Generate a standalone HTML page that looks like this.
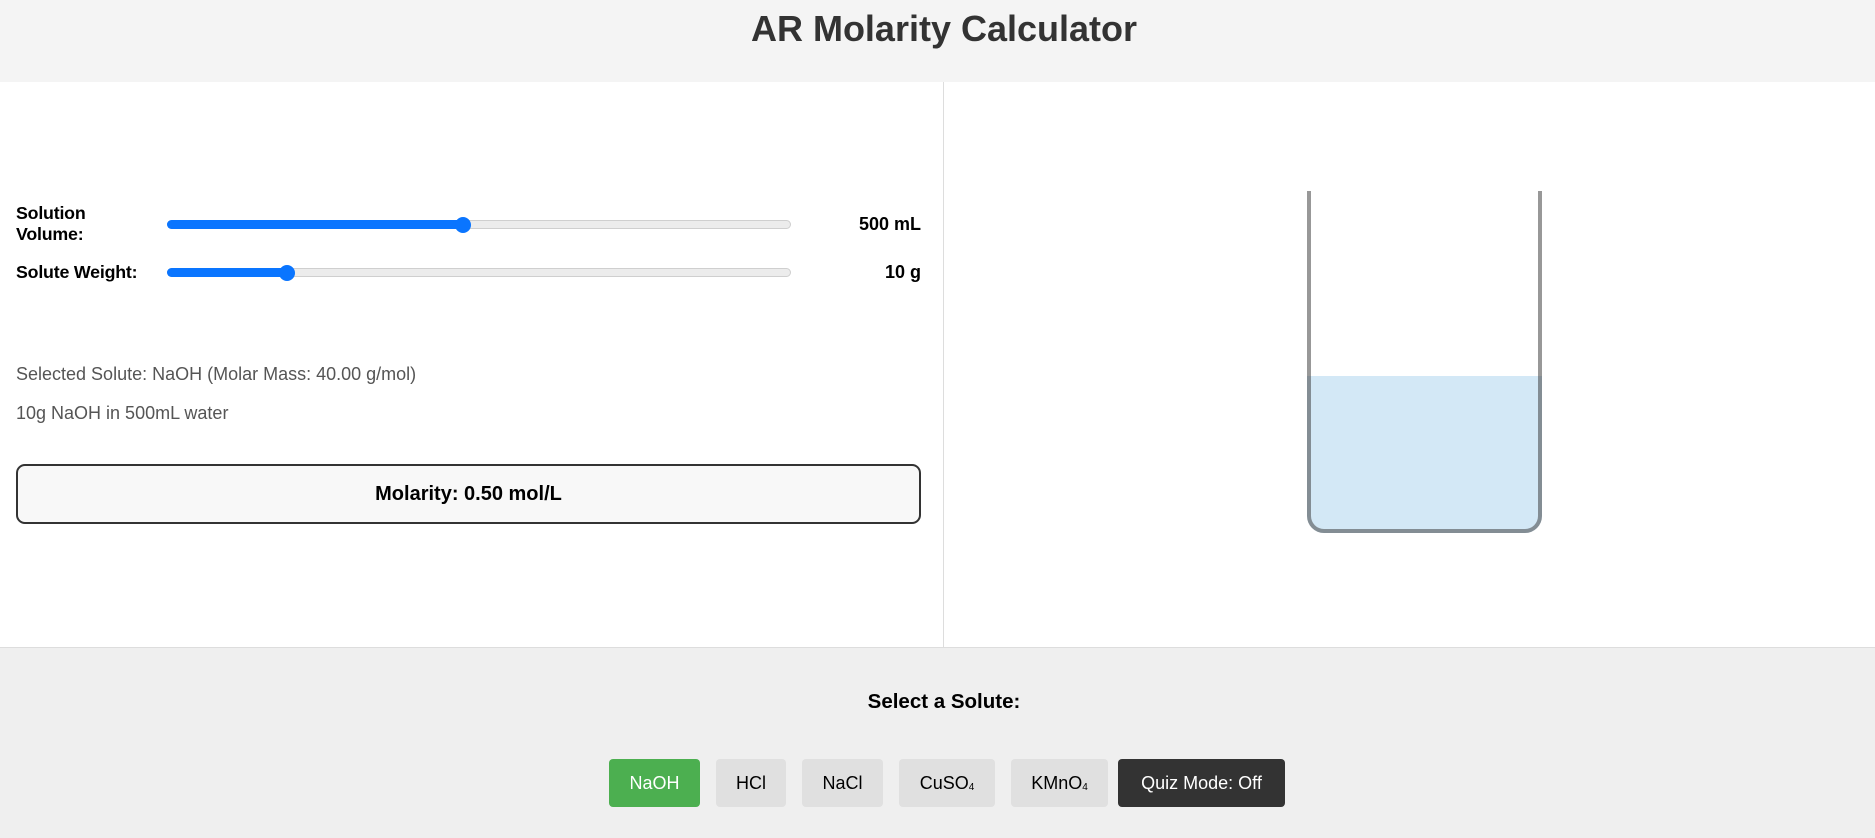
<!DOCTYPE html>
<html><head><meta charset="utf-8"><style>
*{margin:0;padding:0;box-sizing:border-box}
body{width:1875px;height:838px;overflow:hidden;font-family:"Liberation Sans",Arial,sans-serif;background:#fff;position:relative}
.hdr{position:absolute;left:0;top:0;width:1875px;height:82px;background:#f4f4f4}
.hdr h1{position:absolute;left:0;width:1888px;top:8px;text-align:center;font-size:36px;color:#333;font-weight:bold}
.div{position:absolute;left:943px;top:82px;width:1px;height:565px;background:#ddd}
.lbl{position:absolute;left:16px;font-weight:bold;font-size:17.8px;color:#000;line-height:21px;letter-spacing:-0.2px}
.val{position:absolute;right:954px;font-weight:bold;font-size:18px;color:#000}
.track{position:absolute;left:167px;width:624px;height:9px;border-radius:5px;background:#ececec;border:1px solid #cfcfcf}
.fill{position:absolute;left:167px;height:9px;border-radius:5px;background:#0a75ff}
.thumb{position:absolute;width:16px;height:16px;border-radius:50%;background:#0a75ff}
.txt{position:absolute;left:16px;font-size:18px;color:#555}
.box{position:absolute;left:16px;top:464px;width:905px;height:60px;border:2px solid #333;border-radius:9px;background:#f8f8f8;text-align:center;line-height:56px;font-weight:bold;font-size:20px;color:#000}
.beaker{position:absolute;left:1307px;top:191px;width:235px;height:342px;border:4px solid rgba(59,59,59,0.52);border-top:none;border-radius:0 0 17px 17px}
.liq{position:absolute;left:1307px;top:376px;width:235px;height:157px;background:#d3e8f6;border-radius:0 0 17px 17px}
.bot{position:absolute;left:0;top:647px;width:1875px;height:191px;background:#efefef;border-top:1px solid #ddd}
.sel{position:absolute;left:0;width:1888px;top:690px;text-align:center;font-weight:bold;font-size:20.5px;color:#000}
.b{position:absolute;top:759px;height:48px;border-radius:4px;background:#e0e0e0;color:#000;font-size:18px;text-align:center;line-height:48px}
sub{font-size:10px;vertical-align:-1px}
</style></head><body>
<div class="hdr"><h1>AR Molarity Calculator</h1></div>
<div class="div"></div>
<div class="lbl" style="top:203px">Solution<br>Volume:</div>
<div class="track" style="top:220px"></div><div class="fill" style="top:220px;width:300px"></div><div class="thumb" style="left:455px;top:217px"></div>
<div class="val" style="top:214px">500 mL</div>
<div class="lbl" style="top:262px">Solute Weight:</div>
<div class="track" style="top:268px"></div><div class="fill" style="top:268px;width:124px"></div><div class="thumb" style="left:279px;top:265px"></div>
<div class="val" style="top:262px">10 g</div>
<div class="txt" style="top:364px">Selected Solute: NaOH (Molar Mass: 40.00 g/mol)</div>
<div class="txt" style="top:403px">10g NaOH in 500mL water</div>
<div class="box">Molarity: 0.50 mol/L</div>
<div class="liq"></div>
<div class="beaker"></div>
<div class="bot"></div>
<div class="sel">Select a Solute:</div>
<div class="b" style="left:609px;width:91px;background:#4caf50;color:#fff">NaOH</div>
<div class="b" style="left:716px;width:70px">HCl</div>
<div class="b" style="left:802px;width:81px">NaCl</div>
<div class="b" style="left:899px;width:96px">CuSO<sub>4</sub></div>
<div class="b" style="left:1011px;width:97px">KMnO<sub>4</sub></div>
<div class="b" style="left:1118px;width:167px;background:#333;color:#fff">Quiz Mode: Off</div>
</body></html>
